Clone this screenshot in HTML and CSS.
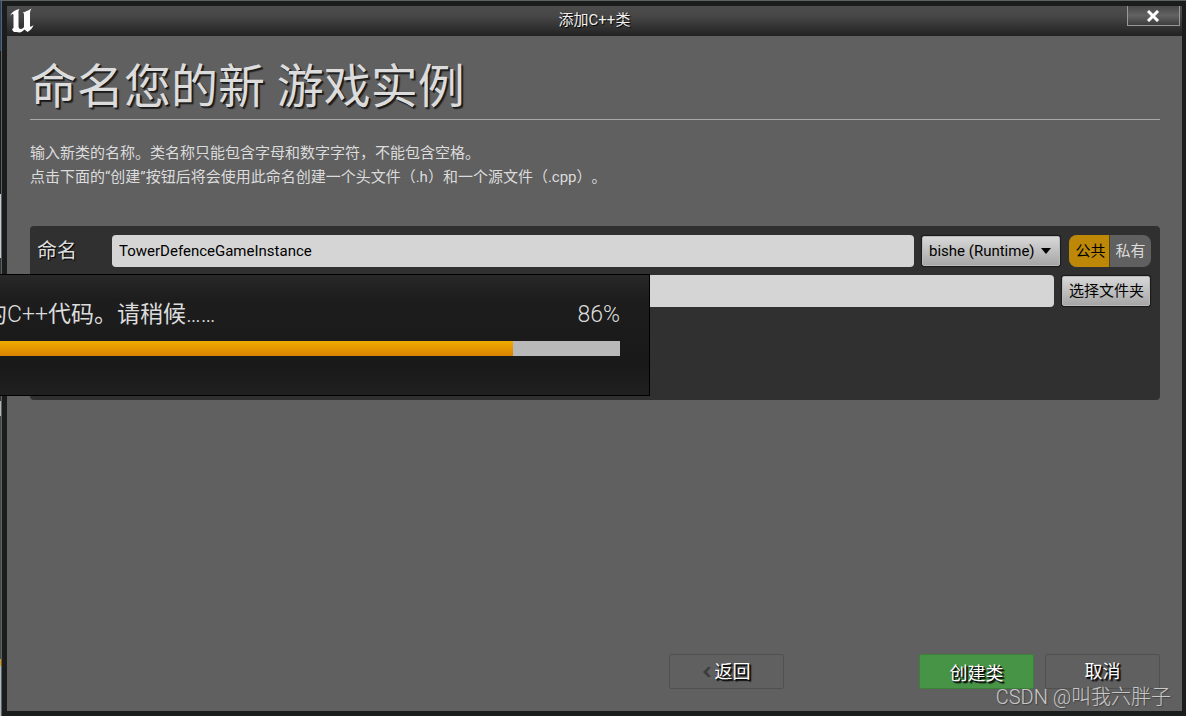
FILE: index.html
```html
<!DOCTYPE html>
<html lang="zh-CN">
<head>
<meta charset="utf-8">
<title>添加C++类</title>
<link rel="stylesheet" href="styles.css">
</head>
<body>
<div class="window">
  <header class="titlebar">
    <svg class="logo" viewBox="0 0 24 26" aria-hidden="true">
      <path d="M0 8C1.500 4.500 4.500 2 9.500 1C8.200 2.500 8.500 4 8.500 5.500V18C8.500 20 9.300 21 10.700 21C12 21 13.200 20.300 14 19V6.500C14 5.300 13.500 4.800 12.500 4.500C15.500 4 18 2.500 21.500 0.500C20.500 2 20 3.500 20 5.500V17.500C20 19 20.800 19.300 23.500 17C22.800 20 20.500 22 17.500 24L14.500 21.500C12.500 23.500 11 24.500 9.500 24.500C8 23.800 6 23.800 4 24C2.500 22.500 1.800 21.500 2.200 20.500C2.800 21 3.500 20.500 3.500 19V7.500C3.500 5.500 2.500 5.500 0 8Z"/>
    </svg>
    <div class="caption">添加C++类</div>
    <button class="close" type="button" aria-label="关闭">
      <svg viewBox="0 0 14 12" aria-hidden="true"><path d="M2 1L12 11M12 1L2 11"/></svg>
    </button>
  </header>
  <main class="client">
    <h1 class="heading">命名您的新 游戏实例</h1>
    <p class="intro">输入新类的名称。类名称只能包含字母和数字字符，不能包含空格。<br>点击下面的“创建”按钮后将会使用此命名创建一个头文件（.h）和一个源文件（.cpp）。</p>
    <form class="panel">
      <div class="row">
        <label class="name-label" for="name">命名</label>
        <input class="field" id="name" type="text" value="TowerDefenceGameInstance">
        <span class="module">
          <select class="gray-button module-select" aria-label="模块"><option>bishe (Runtime)</option></select>
          <svg class="arrow" viewBox="0 0 10 6" aria-hidden="true"><path d="M0 0H10L5 6Z"/></svg>
        </span>
        <span class="access">
          <label class="choice"><input type="radio" name="access" checked><span>公共</span></label>
          <label class="choice"><input type="radio" name="access"><span>私有</span></label>
        </span>
      </div>
      <div class="row">
        <span class="name-label"></span>
        <input class="field" type="text" aria-label="路径">
        <button class="gray-button folder" type="button">选择文件夹</button>
      </div>
    </form>
    <footer class="actions">
      <button class="action back" type="button"><svg viewBox="0 0 8 10" aria-hidden="true"><path d="M5 0H8L4 5L8 10H5L0 5Z"/></svg>返回</button>
      <button class="action create" type="button">创建类</button>
      <button class="action" type="button">取消</button>
    </footer>
  </main>
  <section class="compile">
    <div class="compile-text"><label class="message" for="compile-progress">的<span class="thin">C++</span>代码。请稍候<span class="thin">……</span></label><span class="thin">86%</span></div>
    <progress class="bar" id="compile-progress" value="86" max="100"></progress>
  </section>
  <div class="watermark">CSDN @叫我六胖子</div>
</div>
</body>
</html>
```
FILE: styles.css
```css
* { box-sizing: border-box; }
body {
  margin: 0;
  font: 15px/24px Roboto, "Noto Sans CJK SC", sans-serif;
  color: #dcdcdc;
  background: #606060;
}
button, input, select { font: inherit; }
.window {
  position: relative;
  display: flex;
  flex-direction: column;
  min-height: 100vh;
  overflow: hidden;
  padding: 5px 4px 5px 7px;
  border-top: 1px solid #5d6262;
  background:
    linear-gradient(#273f73 0 7%, #17191d 7% 27%, #c9cbd4 27% 36%, #34343c 36% 56%, #b5b5b9 56% 58%, #44484c 58% 92%, #e09a00 92% 93%, #aeb8c2 93%) 0 0 / 1px 100% no-repeat,
    linear-gradient(#5d6262, #5d6262) 1px 0 / 1px 100% no-repeat,
    #1b1c1c;
}
.titlebar {
  display: grid;
  grid-template-columns: 1fr auto 1fr;
  height: 30px;
  background: linear-gradient(#4d4d4d, #464646 35%, #222);
}
.logo { width: 24px; height: 26px; margin: 2px 3px; fill: #fff; }
.caption {
  line-height: 28px;
  color: #f0f0f0;
  text-shadow: 1px 1px 1px #000;
}
.close {
  display: flex;
  justify-self: end;
  align-items: center;
  justify-content: center;
  width: 53px;
  height: 20px;
  margin-right: 2px;
  padding: 0 2px 0 0;
  border: 1px solid #999;
  border-top: 0;
  background: linear-gradient(#484848, #626262 50%, #3d3d3d);
}
.close svg { width: 14px; height: 12px; fill: none; stroke: #fff; stroke-width: 3; }
.client {
  display: flex;
  flex: 1;
  flex-direction: column;
  padding: 18px 22px 22px 23px;
  background: #606060;
}
.heading {
  margin: 0;
  border-bottom: 1px solid #a8a8a8;
  font-size: 47px;
  line-height: 65px;
  font-weight: 300;
  font-family: Roboto, "Noto Sans CJK SC", sans-serif;
  font-weight: 400;
  text-shadow: 1px 1px 0 #181818, 2px 2px 1px #222;
}
.intro { margin: 21px 0 37px; text-spacing-trim: space-all; }
.panel {
  display: flex;
  flex-direction: column;
  gap: 8px;
  min-height: 174px;
  padding: 9px;
  border-radius: 4px;
  background: #303030;
}
.row { display: flex; align-items: center; gap: 8px; }
.name-label {
  width: 67px;
  margin-left: -2px;
  font-size: 20px;
  line-height: 30px;
  text-shadow: 1px 1px 1px #000;
}
.field {
  flex: 1;
  min-width: 0;
  height: 32px;
  padding: 0 7px;
  border: 0;
  border-radius: 4px;
  color: #000;
  background: #d5d5d5;
}
.gray-button {
  height: 30px;
  padding: 0 6px;
  border: 1px solid #b9b9b9;
  border-radius: 2px;
  color: #000;
  background: linear-gradient(#d8d8d8, #a6a6a6);
  box-shadow: 0 0 1px 1px #1a1a1a;
}
.module { position: relative; display: flex; }
.module-select { width: 138px; appearance: none; }
.arrow { position: absolute; right: 9px; top: 12px; width: 10px; height: 6px; pointer-events: none; }
.access { display: flex; overflow: hidden; border-radius: 8px; margin-left: 1px; background: #606060; }
.choice input { position: absolute; opacity: 0; }
.choice span { display: block; width: 41px; line-height: 32px; text-align: center; }
.choice input:checked + span { color: #000; background: #bd8807; border-right: 1px solid #5b4310; padding-left: 3px; }
.folder { width: 88px; margin-right: 1px; white-space: nowrap; }
.actions { display: flex; justify-content: flex-end; gap: 11px; margin-top: auto; }
.action {
  display: flex;
  align-items: center;
  justify-content: center;
  gap: 4px;
  width: 115px;
  height: 35px;
  padding: 1px 0 0;
  border: 1px solid #505050;
  border-radius: 2px;
  font-size: 18px;
  color: #fff;
  background: #606060;
  text-shadow: 1px 1px 1px #000, 2px 2px 1px #111;
}
.back { margin-right: 124px; }
.back svg { width: 8px; height: 10px; fill: #3c3c3c; }
.create { padding-top: 4px; border-color: #3b8038; background: #479447; }
.compile {
  position: absolute;
  top: 273px;
  left: -174px;
  width: 824px;
  padding: 23px 29px 39px;
  border: 1px solid #000;
  background: linear-gradient(#282828, #1d1d1d 20%, #191919 75%, #202020);
}
.compile-text {
  display: flex;
  justify-content: space-between;
  margin-bottom: 10px;
  font-size: 23px;
  line-height: 33px;
}
.thin { font-weight: 300; }
.message { margin-left: 128px; text-spacing-trim: space-all; }
.bar { display: block; width: 100%; height: 15px; border: 0; appearance: none; background: #b9b9b9; }
.bar::-webkit-progress-bar { background: #b9b9b9; }
.bar::-webkit-progress-value { background: linear-gradient(#f0ab00, #d98200); }
.watermark {
  position: absolute;
  right: 15px;
  bottom: 4px;
  font: 300 20px/30px Roboto, "Noto Sans CJK SC", sans-serif;
  color: #c8c8c8;
  text-shadow: 1px 1px 1px #444;
}
```
